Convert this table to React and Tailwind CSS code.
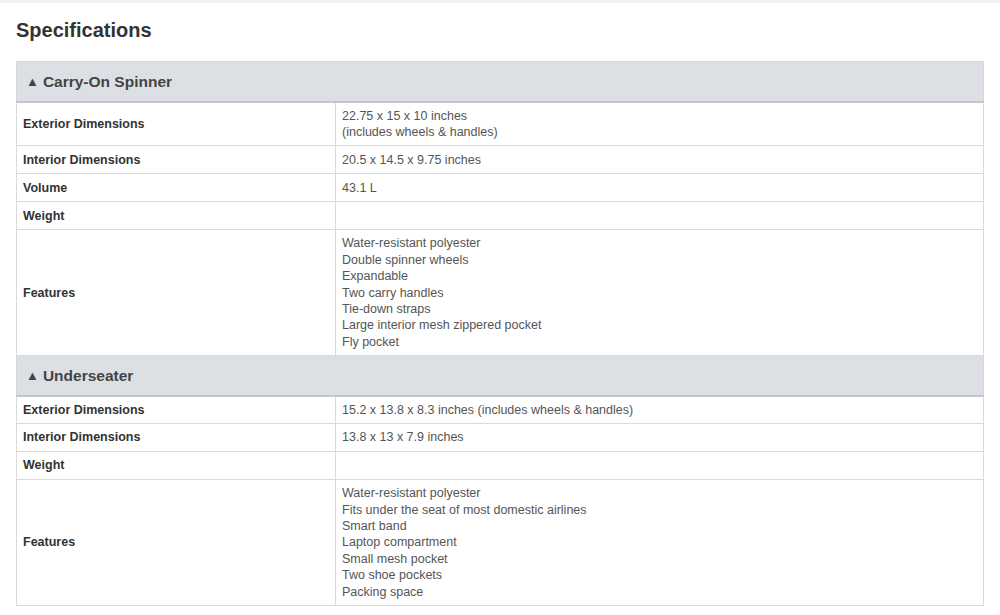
import React from 'react';

const specs = [
  {
    title: 'Carry-On Spinner',
    rows: [
      { label: 'Exterior Dimensions', value: ['22.75 x 15 x 10 inches', '(includes wheels & handles)'] },
      { label: 'Interior Dimensions', value: ['20.5 x 14.5 x 9.75 inches'] },
      { label: 'Volume', value: ['43.1 L'] },
      { label: 'Weight', value: [] },
      {
        label: 'Features',
        value: [
          'Water-resistant polyester',
          'Double spinner wheels',
          'Expandable',
          'Two carry handles',
          'Tie-down straps',
          'Large interior mesh zippered pocket',
          'Fly pocket',
        ],
      },
    ],
  },
  {
    title: 'Underseater',
    rows: [
      { label: 'Exterior Dimensions', value: ['15.2 x 13.8 x 8.3 inches (includes wheels & handles)'] },
      { label: 'Interior Dimensions', value: ['13.8 x 13 x 7.9 inches'] },
      { label: 'Weight', value: [] },
      {
        label: 'Features',
        value: [
          'Water-resistant polyester',
          'Fits under the seat of most domestic airlines',
          'Smart band',
          'Laptop compartment',
          'Small mesh pocket',
          'Two shoe pockets',
          'Packing space',
        ],
      },
    ],
  },
];

const SectionHeader = ({ title }) => (
  <tr>
    <th
      colSpan={2}
      className="h-[40px] bg-[#dce0e5] border border-[#d6d6d6] border-b-[#c3c7cc] border-b-2 px-[9px] text-left align-middle text-[15.5px] font-bold text-[#444]"
    >
      <span className="mr-[4px] text-[13px] relative top-[-1px]">▲</span>
      {title}
    </th>
  </tr>
);

const SpecRow = ({ label, value }) => (
  <tr>
    <td className="w-[319px] h-[28px] border border-[#dadada] px-[6px] py-[5px] align-middle text-[12.5px] leading-[16.4px] font-bold text-[#333]">
      {label}
    </td>
    <td className="h-[28px] border border-[#dadada] px-[6px] py-[5px] align-middle text-[12.5px] leading-[16.4px] text-[#555]">
      {value.length === 0 ? <span>&nbsp;</span> : value.map((line, i) => <div key={i}>{line}</div>)}
    </td>
  </tr>
);

export default function App() {
  return (
    <div className="min-h-[615px] bg-white font-['Liberation_Sans',Arial,sans-serif]">
      <div className="h-[3px] bg-[#f2f2f2]"></div>
      <div className="px-4 pt-[15px]">
        <h2 className="text-[20px] leading-[24px] font-bold text-[#333]">Specifications</h2>
        <table className="mt-[19px] w-[968px] border-collapse">
          <tbody>
            {specs.map((section) => (
              <React.Fragment key={section.title}>
                <SectionHeader title={section.title} />
                {section.rows.map((row) => (
                  <SpecRow key={section.title + row.label} label={row.label} value={row.value} />
                ))}
              </React.Fragment>
            ))}
          </tbody>
        </table>
      </div>
    </div>
  );
}
